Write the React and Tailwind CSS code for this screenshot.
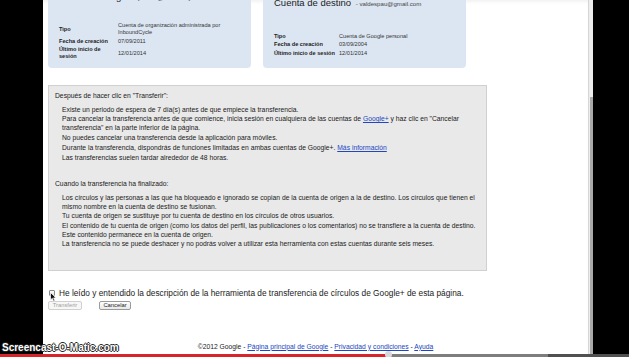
import React from "react";

const FONT = "[font-family:'Liberation_Sans',Arial,sans-serif]";

function Row({ label, value, labelW }) {
  return (
    <div className="flex items-center py-[0.75px]">
      <div className={`${labelW} shrink-0 font-bold text-[#222]`}>{label}</div>
      <div className="text-[#333]">{value}</div>
    </div>
  );
}

function Link({ children }) {
  return <span className="text-[#2146c2] underline">{children}</span>;
}

export default function App() {
  return (
    <div className={`relative flex h-[357px] w-[629px] overflow-hidden bg-black ${FONT}`}>
      <div className="w-[43px] shrink-0" />
      <div className="relative w-[545px] shrink-0 overflow-hidden bg-white shadow-[inset_0_4px_4px_-3px_rgba(0,0,0,0.08)]">
        <div className="pl-[5px]">
          {/* cards */}
          <div className="-mt-[20px] flex gap-[12px]">
            <div className="h-[88px] w-[203px] rounded-b-[4px] bg-[#dce6f2] pl-[11px] pt-[9.5px]">
              <div className="mb-[16.75px] whitespace-nowrap text-[9.5px] leading-[14px] text-[#222]">
                Cuenta de origen{" "}
                <span className="text-[6.1px] text-[#444]">- jvaldes@inboundcycle.com</span>
              </div>
              <div className="text-[5.6px] leading-[7px]">
                <Row
                  labelW="w-[59px]"
                  label="Tipo"
                  value={
                    <>
                      Cuenta de organización administrada por
                      <br />
                      InboundCycle
                    </>
                  }
                />
                <Row labelW="w-[59px]" label="Fecha de creación" value="07/09/2011" />
                <Row
                  labelW="w-[59px]"
                  label={
                    <>
                      Último inicio de
                      <br />
                      sesión
                    </>
                  }
                  value="12/01/2014"
                />
              </div>
            </div>
            <div className="h-[88px] w-[203px] rounded-b-[4px] bg-[#dce6f2] pl-[11px] pt-[16px]">
              <div className="mb-[20.75px] whitespace-nowrap text-[9.5px] leading-[14px] text-[#222]">
                Cuenta de destino{" "}
                <span className="ml-[2px] text-[6.1px] text-[#444]">- valdespau@gmail.com</span>
              </div>
              <div className="text-[5.6px] leading-[7px]">
                <Row labelW="w-[65px]" label="Tipo" value="Cuenta de Google personal" />
                <Row labelW="w-[65px]" label="Fecha de creación" value="03/09/2004" />
                <Row labelW="w-[65px]" label="Último inicio de sesión" value="12/01/2014" />
              </div>
            </div>
          </div>

          {/* gray box */}
          <div className="mt-[16.5px] w-[439px] whitespace-nowrap border border-[#d0d0d0] bg-[#e9e9e9] pb-[22px] pl-[6px] pt-[5px] text-[6.75px] leading-[9px] text-[#1a1a1a]">
            <div className="mb-[5px]">Después de hacer clic en "Transferir":</div>
            <div className="ml-[7px] flex flex-col gap-[0.75px]">
              <div>Existe un periodo de espera de 7 día(s) antes de que empiece la transferencia.</div>
              <div>
                Para cancelar la transferencia antes de que comience, inicia sesión en cualquiera de las cuentas de{" "}
                <Link>Google+</Link> y haz clic en "Cancelar
                <br />
                transferencia" en la parte inferior de la página.
              </div>
              <div>No puedes cancelar una transferencia desde la aplicación para móviles.</div>
              <div>
                Durante la transferencia, dispondrás de funciones limitadas en ambas cuentas de Google+.{" "}
                <Link>Más información</Link>
              </div>
              <div>Las transferencias suelen tardar alrededor de 48 horas.</div>
            </div>
            <div className="mb-[5px] mt-[17px]">Cuando la transferencia ha finalizado:</div>
            <div className="ml-[7px] flex flex-col gap-[0.5px]">
              <div>
                Los círculos y las personas a las que ha bloqueado e ignorado se copian de la cuenta de origen a la de destino. Los círculos que tienen el
                <br />
                mismo nombre en la cuenta de destino se fusionan.
              </div>
              <div>Tu cuenta de origen se sustituye por tu cuenta de destino en los círculos de otros usuarios.</div>
              <div>
                El contenido de tu cuenta de origen (como los datos del perfil, las publicaciones o los comentarios) no se transfiere a la cuenta de destino.
                <br />
                Este contenido permanece en la cuenta de origen.
              </div>
              <div>La transferencia no se puede deshacer y no podrás volver a utilizar esta herramienta con estas cuentas durante seis meses.</div>
            </div>
          </div>

          {/* checkbox */}
          <div className="mt-[17px] flex items-center whitespace-nowrap text-[8.3px] leading-[10px] text-[#1a1a1a]">
            <div className="ml-[1px] h-[6px] w-[6px] rounded-[1px] border border-[#8a8a8a] bg-gradient-to-b from-white to-[#e4e4e4]" />
            <span className="ml-[4px]">
              He leído y entendido la descripción de la herramienta de transferencia de círculos de Google+ de esta página.
            </span>
          </div>

          {/* buttons */}
          <div className="mt-[3px] flex gap-[17px]">
            <div className="flex h-[9px] w-[34px] items-center justify-center rounded-[2px] border border-[#d0d0d0] bg-[#f7f7f7] text-[5.8px] text-[#a0a0a0]">
              Transferir
            </div>
            <div className="flex h-[9px] w-[32px] items-center justify-center rounded-[2px] border border-[#9a9a9a] bg-gradient-to-b from-white to-[#e8e8e8] text-[5.8px] text-[#222]">
              Cancelar
            </div>
          </div>

          {/* footer */}
          <div className="-ml-[5px] mt-[31.5px] whitespace-nowrap text-center text-[6.75px] leading-[9px] text-[#222]">
            ©2012 Google - <Link>Página principal de Google</Link> - <Link>Privacidad y condiciones</Link> -{" "}
            <Link>Ayuda</Link>
          </div>
        </div>

        {/* cursor */}
        <svg className="absolute left-[7px] top-[292px]" width="7" height="10" viewBox="0 0 7 10">
          <path d="M0.5 0.5 L0.5 8 L2.3 6.3 L3.6 9.3 L4.8 8.8 L3.6 5.9 L6 5.9 Z" fill="#111" stroke="#fff" strokeWidth="0.7" />
        </svg>
      </div>

      {/* scrollbar */}
      <div className="flex w-[5px] shrink-0 flex-col border-l border-[#d6d6d6] bg-[#ededed]">
        <div className="h-[97px] shrink-0" />
        <div className="ml-[1px] flex-1 bg-[#a9a9a9]" />
      </div>
      <div className="flex-1" />

      {/* watermark */}
      <div className="absolute left-[2px] top-[342px] text-[10px] font-bold leading-[12px] text-white [text-shadow:1px_0_0_#222,-1px_0_0_#222,0_1px_0_#222,0_-1px_0_#222]">
        Screencast-O-Matic.com
      </div>

      {/* video progress bar */}
      <div className="absolute bottom-0 left-0 flex h-[3px] w-full">
        <div className="w-[388px] bg-[#d7242d]" />
        <div className="w-[160px] bg-[#7d7d7d]" />
        <div className="flex-1 bg-[#505050]" />
      </div>
      <div className="absolute left-[385px] top-[351px] h-[7px] w-[7px] rounded-full bg-[#d8d8d8]" />
    </div>
  );
}
